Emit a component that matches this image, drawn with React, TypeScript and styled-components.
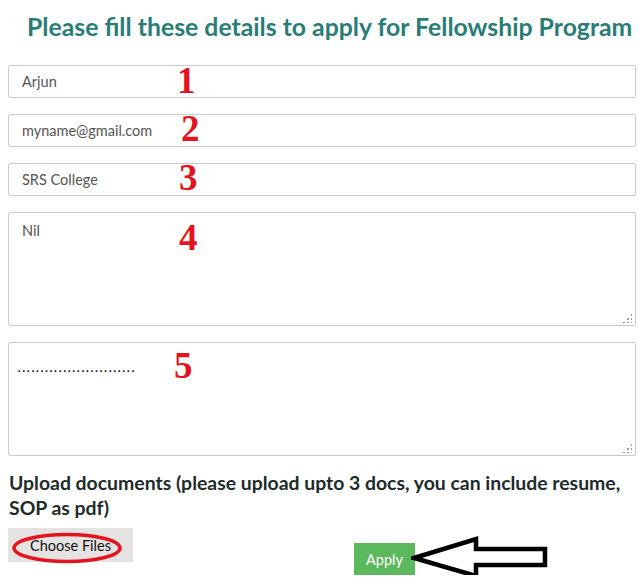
import { ReactElement } from 'react';
import styled, { createGlobalStyle } from 'styled-components';

const TEAL = '#2a7d77';
const FIELD_TEXT = '#555555';
const BORDER = '#cccccc';
const MARK_RED = '#e3141e';

const GlobalStyle = createGlobalStyle`
  html, body {
    margin: 0;
    padding: 0;
    background: #ffffff;
  }
  body {
    font-family: 'Lato', 'Noto Sans', sans-serif;
  }
`;

const Page = styled.div`
  width: 638px;
  padding: 0 2px 0 8px;
  box-sizing: border-box;
`;

const Title = styled.h2`
  margin: 0;
  padding: 13px 0 0 19px;
  height: 65px;
  box-sizing: border-box;
  font-size: 24.8px;
  font-weight: 700;
  color: ${TEAL};
  white-space: nowrap;
  line-height: 28px;
`;

const Form = styled.form`
  display: flex;
  flex-direction: column;
  gap: 16px;
`;

const Field = styled.div`
  position: relative;
`;

const TextInput = styled.input`
  display: block;
  width: 100%;
  height: 33px;
  box-sizing: border-box;
  padding: 0 13px;
  border: 1px solid ${BORDER};
  border-radius: 2px;
  font-family: 'Lato', sans-serif;
  font-size: 14.5px;
  color: ${FIELD_TEXT};
  background: #fff;
  outline: none;
`;

const TextArea = styled.textarea`
  display: block;
  width: 100%;
  height: 114px;
  box-sizing: border-box;
  padding: 9px 13px;
  border: 1px solid ${BORDER};
  border-radius: 2px;
  font-family: 'Lato', sans-serif;
  font-size: 14.5px;
  color: ${FIELD_TEXT};
  background: #fff;
  resize: none;
  outline: none;
`;

// the little dotted grip in the corner of a textarea
const Grip = styled.span`
  position: absolute;
  right: 4px;
  bottom: 3px;
  width: 10px;
  height: 10px;
  background:
    radial-gradient(circle, #9a9a9a 0 1px, transparent 1.2px) 8px 0 / 4px 4px no-repeat,
    radial-gradient(circle, #9a9a9a 0 1px, transparent 1.2px) 4px 4px / 4px 4px no-repeat,
    radial-gradient(circle, #9a9a9a 0 1px, transparent 1.2px) 8px 4px / 4px 4px no-repeat,
    radial-gradient(circle, #9a9a9a 0 1px, transparent 1.2px) 0 8px / 4px 4px no-repeat,
    radial-gradient(circle, #9a9a9a 0 1px, transparent 1.2px) 4px 8px / 4px 4px no-repeat,
    radial-gradient(circle, #9a9a9a 0 1px, transparent 1.2px) 8px 8px / 4px 4px no-repeat;
`;

// red hand-drawn numbering laid over the form
const Marker = styled.span<{ $left: number; $top: number }>`
  position: absolute;
  left: ${(p) => p.$left}px;
  top: ${(p) => p.$top}px;
  font-family: 'Liberation Serif', serif;
  font-weight: 700;
  font-size: 37px;
  line-height: 1;
  color: ${MARK_RED};
  pointer-events: none;
`;

const Dots = styled.span`
  position: absolute;
  left: 9px;
  top: 16px;
  font-family: 'Liberation Sans', sans-serif;
  font-size: 16px;
  letter-spacing: 0.1px;
  color: #111;
  pointer-events: none;
`;

const UploadLabel = styled.p`
  margin: 14px 0 0 1px;
  font-size: 19.4px;
  font-weight: 700;
  line-height: 25px;
  color: #1d2b2b;
`;

const ActionRow = styled.div`
  display: flex;
  align-items: flex-start;
  gap: 221px;
  margin-top: 8px;
`;

const FileButton = styled.label`
  position: relative;
  display: flex;
  align-items: center;
  justify-content: center;
  width: 125px;
  height: 34px;
  background: #e5e3e1;
  font-size: 14.5px;
  color: #111;
  cursor: pointer;
`;

const Ring = styled.svg`
  position: absolute;
  left: 4px;
  top: 4px;
  pointer-events: none;
`;

const ApplyWrap = styled.div`
  position: relative;
  margin-top: 15px;
`;

const ApplyButton = styled.button`
  width: 61px;
  height: 32px;
  border: none;
  border-radius: 0;
  background: #5cb85c;
  color: #ffffff;
  font-family: 'Lato', sans-serif;
  font-size: 14.5px;
  cursor: pointer;
`;

const Arrow = styled.svg`
  position: absolute;
  left: 57px;
  top: -8px;
  pointer-events: none;
`;

const App = (): ReactElement => {
  return (
    <Page>
      <GlobalStyle />
      <Title>Please fill these details to apply for Fellowship Program</Title>
      <Form onSubmit={(e) => e.preventDefault()}>
        <Field>
          <TextInput defaultValue="Arjun" />
          <Marker $left={169} $top={-3}>1</Marker>
        </Field>
        <Field>
          <TextInput defaultValue="myname@gmail.com" />
          <Marker $left={173} $top={-4}>2</Marker>
        </Field>
        <Field>
          <TextInput defaultValue="SRS College" />
          <Marker $left={171} $top={-4}>3</Marker>
        </Field>
        <Field>
          <TextArea defaultValue="Nil" />
          <Grip />
          <Marker $left={171} $top={7}>4</Marker>
        </Field>
        <Field>
          <TextArea defaultValue="" />
          <Grip />
          <Dots>..........................</Dots>
          <Marker $left={166} $top={5}>5</Marker>
        </Field>
      </Form>
      <UploadLabel>
        Upload documents (please upload upto 3 docs, you can include resume, SOP as pdf)
      </UploadLabel>
      <ActionRow>
        <FileButton>
          Choose Files
          <Ring width="112" height="32" viewBox="0 0 112 32">
            <ellipse cx="55" cy="16" rx="53" ry="13.5" fill="none" stroke={MARK_RED} strokeWidth="3.5" />
          </Ring>
        </FileButton>
        <ApplyWrap>
          <ApplyButton type="button">Apply</ApplyButton>
          <Arrow width="142" height="44" viewBox="0 0 142 44">
            <path
              d="M3 23 L65 4 L65 14 L134 14 L134 30 L65 30 L65 41 Z"
              fill="#ffffff"
              stroke="#000000"
              strokeWidth="4.5"
              strokeLinejoin="miter"
            />
          </Arrow>
        </ApplyWrap>
      </ActionRow>
    </Page>
  );
};

export default App;
